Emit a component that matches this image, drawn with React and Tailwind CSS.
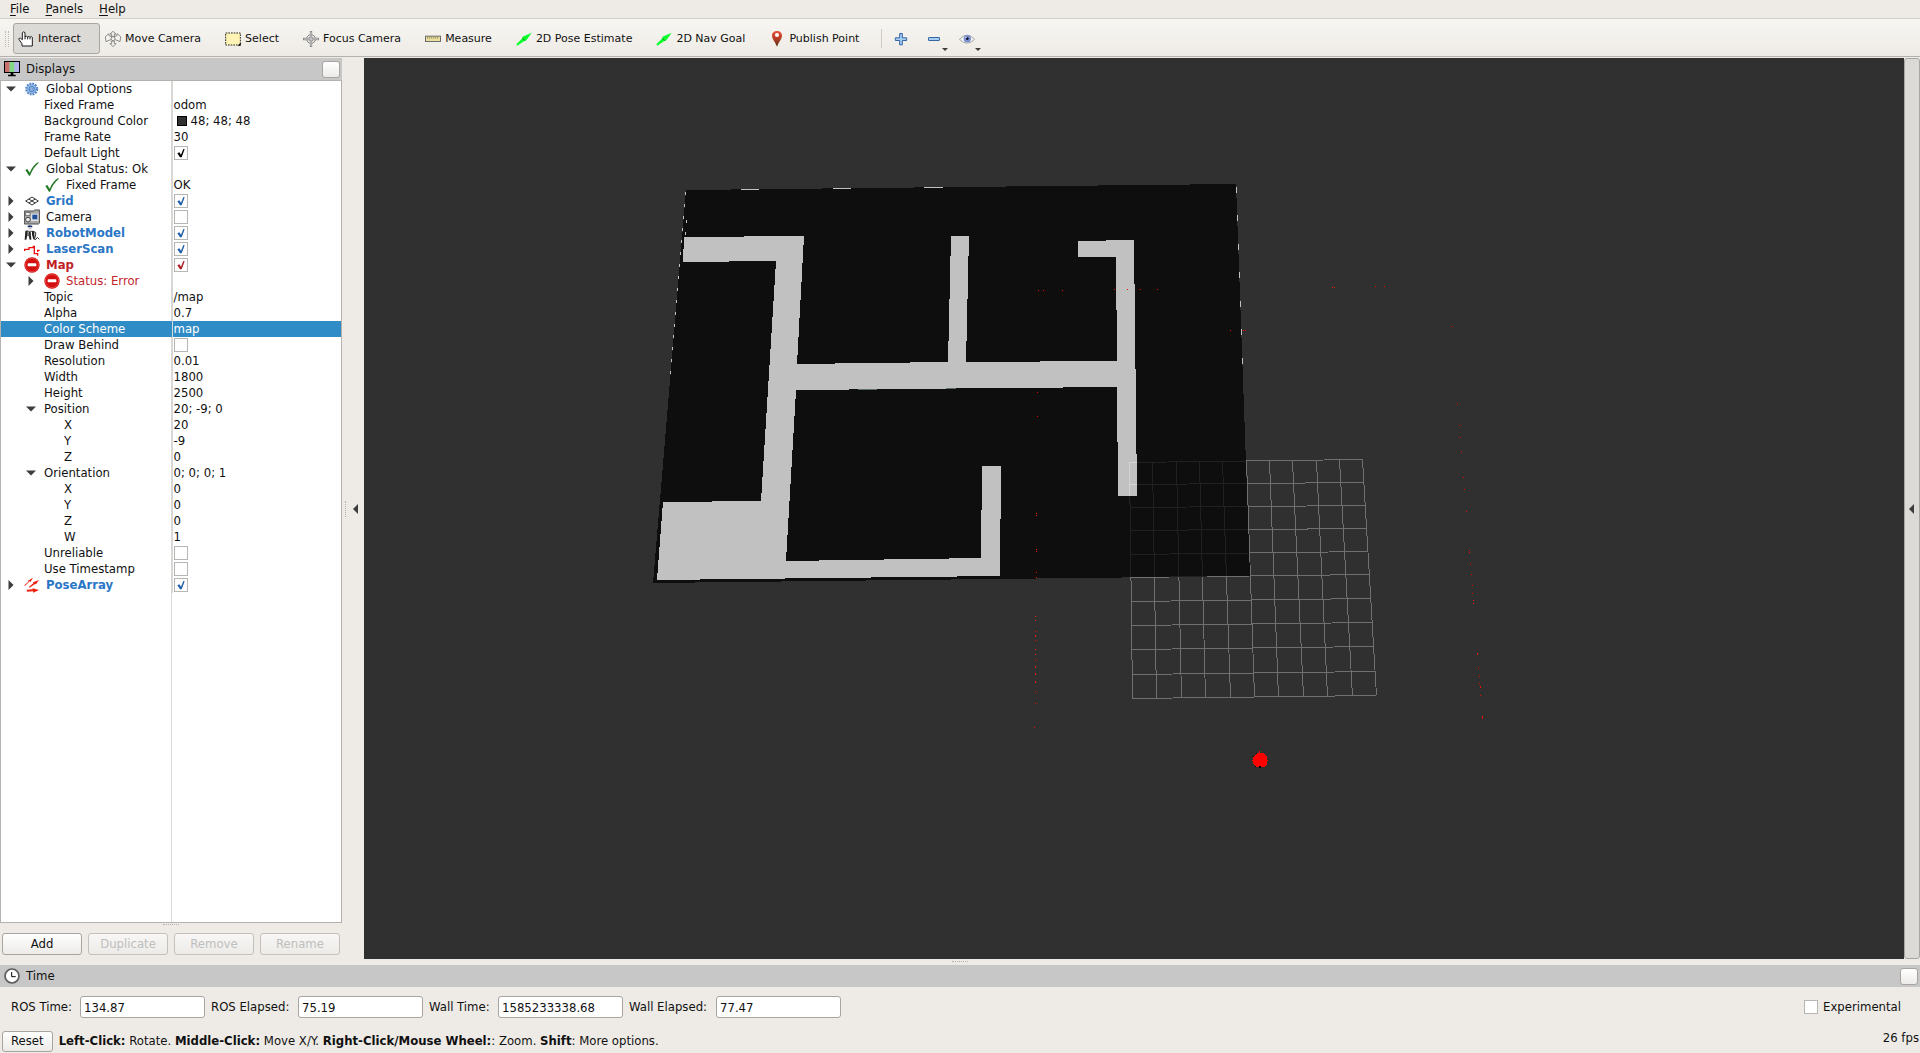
import React from "react";

/* ---------- toolbar icons ---------- */

function Icon({ children, className = "" }) {
  return (
    <svg viewBox="0 0 48 48" className={"h-4 w-4 shrink-0 " + className} aria-hidden="true">
      {children}
    </svg>
  );
}

const HandIcon = () => (
  <Icon>
    <path
      d="M13 5v21l-5-4q-5-2-6 2l10 14v7h31V19q-3-5-7 0q-3-5-7-1q-3-4-8-1V5q-4-5-8 0z"
      fill="#fff"
      stroke="#1c1c1c"
      strokeWidth="3"
      strokeLinejoin="round"
    />
    <path d="M21 16v9M29 18v7M36 19v6" stroke="#1c1c1c" strokeWidth="3" />
  </Icon>
);

const MoveIcon = () => (
  <Icon>
    <g fill="#f4f3f0" stroke="#777" strokeWidth="2.5" strokeLinejoin="round">
      <path d="M24 1l9 8h-5v9h-8V9h-5z" />
      <path d="M24 47l9-9h-5v-8h-8v8h-5z" />
      <path d="M1 17l11-9v6l9 3v8l-9 3-9 4z" />
      <path d="M47 17L36 8v6l-9 3v8l9 3 9 4z" />
      <circle cx="24" cy="23" r="6" />
    </g>
  </Icon>
);

const SelectIcon = () => (
  <Icon>
    <rect x="2" y="6" width="44" height="36" fill="#fff4b5" stroke="#222" strokeWidth="3" strokeDasharray="5 3" />
    <path d="M38 44h9v-9z" fill="#000" />
  </Icon>
);

const FocusIcon = () => (
  <Icon>
    <g fill="none" stroke="#858585" strokeWidth="3">
      <circle cx="24" cy="24" r="13" />
      <circle cx="24" cy="24" r="6" fill="#ccc" />
      <path d="M24 0v48M0 24h48" strokeWidth="7" stroke="#8b8b8b" />
      <path d="M24 3v42M3 24h42" strokeWidth="2" stroke="#f2f2f2" />
    </g>
  </Icon>
);

const MeasureIcon = () => (
  <Icon>
    <rect x="1.5" y="15.500" width="45" height="16" fill="#e9df9f" stroke="#6d6d6d" strokeWidth="3" />
    <path d="M8 17v6M14 17v6M20 17v6M26 17v6M32 17v6M38 17v6" stroke="#77713f" strokeWidth="2" />
  </Icon>
);

const ArrowIcon = () => (
  <Icon>
    <path d="M1 40l3 4 24-16 1 3 18-26-29 13 2 3z" fill="#0bff2b" />
    <path d="M19 22l8 7" stroke="#0a8a1c" strokeWidth="3" />
  </Icon>
);

const PinIcon = () => (
  <Icon>
    <defs>
      <linearGradient id="pin" x1="0" y1="0" x2="0" y2="1">
        <stop offset="0" stopColor="#e8553d" />
        <stop offset="0.5" stopColor="#b63a22" />
        <stop offset="1" stopColor="#4d3a1c" />
      </linearGradient>
    </defs>
    <path d="M24 0c-9 0-15 6-15 14 0 9 9 18 15 33 6-15 15-24 15-33C39 6 33 0 24 0z" fill="url(#pin)" />
    <circle cx="24" cy="12" r="6" fill="#fff" />
  </Icon>
);

const PlusIcon = () => (
  <Icon>
    <path d="M20 7.500h8v13h13v8H28v13h-8v-13H7v-8h13z" fill="#a6cdf0" stroke="#3465a4" strokeWidth="3" strokeLinejoin="round" />
  </Icon>
);

const MinusIcon = () => (
  <Icon>
    <rect x="7.500" y="19.500" width="33" height="9" rx="1" fill="#a6cdf0" stroke="#3465a4" strokeWidth="3" />
  </Icon>
);

const EyeIcon = () => (
  <Icon>
    <path d="M1 25Q24 0 47 25Q24 48 1 25z" fill="#f2f2f2" stroke="#a9a9a9" strokeWidth="3" />
    <circle cx="25" cy="23" r="11" fill="#7d8ed0" />
    <circle cx="25" cy="23" r="4" fill="#0e1230" />
    <circle cx="21" cy="19" r="2" fill="#fff" />
  </Icon>
);

/* ---------- display tree icons ---------- */

const MonitorIcon = () => (
  <Icon>
    <rect x="1.500" y="1.500" width="45" height="33" fill="#b2b2ee" stroke="#000" strokeWidth="3" />
    <rect x="3" y="3" width="14" height="30" fill="#c87070" />
    <rect x="17" y="3" width="14" height="30" fill="#84d884" />
    <path d="M20 36h8v5h7v5H12v-5h8z" fill="#000" />
  </Icon>
);

const GearIcon = () => (
  <Icon>
    <circle cx="23" cy="24" r="16" fill="none" stroke="#4d82c8" strokeWidth="7" strokeDasharray="5 3.380" />
    <circle cx="23" cy="24" r="14" fill="#9cc0ea" stroke="#4d82c8" strokeWidth="2" />
    <circle cx="23" cy="24" r="8" fill="#9cc0ea" stroke="#3f74bb" strokeWidth="3" />
    <circle cx="23" cy="24" r="3" fill="#e8f1fb" stroke="#3f74bb" strokeWidth="2" />
  </Icon>
);

const OkIcon = () => (
  <Icon>
    <path d="M4 27l6-3 7 11C23 20 32 9 43 3l1 3C33 15 25 27 18 44h-3z" fill="#227a26" />
  </Icon>
);

const GridIcon = () => (
  <Icon>
    <g fill="none" stroke="#333" strokeWidth="3">
      <path d="M24 12l19 12-19 12L5 24z" />
      <path d="M14.500 18l19 12M33.500 18l-19 12" />
    </g>
  </Icon>
);

const CameraIcon = () => (
  <Icon>
    <path d="M1 6h27l4-3h15v39l-4 3H1z" fill="#a9a9a9" stroke="#4a4a4a" strokeWidth="3" />
    <rect x="5" y="11" width="13" height="9" fill="#eee" stroke="#555" strokeWidth="2" />
    <circle cx="12" cy="32" r="7" fill="#eee" stroke="#444" strokeWidth="3" />
    <rect x="21" y="14" width="22" height="22" fill="#e3e3e3" />
    <rect x="25" y="17" width="15" height="14" fill="#1e4f9c" />
  </Icon>
);

const RobotIcon = () => (
  <Icon>
    <path d="M10 3q8-4 15 0v4H12z" fill="#17306e" />
    <path d="M13 8h10v5H13z" fill="#ccc" />
    <path d="M4 18l7-2v12l-4 16H2zM14 20h6l2 24h-5l-4-16zM24 17l7 2v10l2 14h-5l-4-14z" fill="#222" />
    <path d="M9 19h16M10 31h10" stroke="#555" strokeWidth="3" />
    <path d="M30 20q8 1 5 10l-4 13h5l4-6 6 6" fill="none" stroke="#3c3c3c" strokeWidth="3" />
  </Icon>
);

const LaserIcon = () => (
  <Icon>
    <path d="M2 30v-5h13v-5h13v-4h3v22h10v6M41 33v-5h6" fill="none" stroke="#f01010" strokeWidth="4" />
  </Icon>
);

const ErrorIcon = () => (
  <Icon>
    <circle cx="24" cy="24" r="23" fill="#d40f0f" />
    <circle cx="24" cy="24" r="20" fill="none" stroke="#ee5a55" strokeWidth="2" />
    <rect x="11" y="19" width="26" height="9" rx="2" fill="#fff" />
  </Icon>
);

const PosesIcon = () => (
  <Icon>
    <path
      d="M1 25l12-11-1-3L27 2 20 14l-3-1L3 27zM15 29l13-10-1-3 18-7-9 13-3-1-16 11zM8 38l18-1v-3l19 5-17 8-1-4-18 1z"
      fill="#ee2211"
    />
  </Icon>
);

const ClockIcon = () => (
  <Icon>
    <circle cx="24" cy="24" r="21" fill="#fff" stroke="#5c5c5c" strokeWidth="5" />
    <path d="M23 12v14h12" fill="none" stroke="#000" strokeWidth="3" />
  </Icon>
);

/* ---------- shared controls ---------- */

const CHECK_COLORS = {
  black: "#000000",
  blue: "#1f5fa5",
  red: "#a81c22",
};

function CheckBox({ label, checked = false, color = "black", id }) {
  return (
    <span className="grid h-3.5 w-3.5 shrink-0">
      <input
        id={id}
        type="checkbox"
        aria-label={id ? undefined : label}
        defaultChecked={checked}
        className="peer col-start-1 row-start-1 m-0 h-3.5 w-3.5 appearance-none border border-[#b8b6b3] bg-white"
      />
      <svg
        viewBox="0 0 42 42"
        className="pointer-events-none invisible col-start-1 row-start-1 h-3.5 w-3.5 peer-checked:visible"
        aria-hidden="true"
      >
        <path d="M10 22l6-3 5 7 7-17 4 1-9 24h-5z" fill={CHECK_COLORS[color]} />
      </svg>
    </span>
  );
}

function PushButton({ children, className = "", disabled, label }) {
  return (
    <button
      type="button"
      disabled={disabled}
      aria-label={label}
      className={
        "rounded-[3px] border border-[#a8a4a0] bg-linear-to-b from-white to-[#ecebe8] text-center disabled:border-[#c4c1bd] disabled:from-[#f8f7f5] disabled:text-[#bebebe] " +
        className
      }
    >
      {children}
    </button>
  );
}

/* ---------- menu and tool bars ---------- */

function MenuBar() {
  return (
    <nav className="flex h-[18px] items-center gap-4 px-2.5">
      {["File", "Panels", "Help"].map((m) => (
        <button key={m} type="button" className="leading-4">
          <span className="underline underline-offset-2">{m[0]}</span>
          {m.slice(1)}
        </button>
      ))}
    </nav>
  );
}

const TOOLS = [
  ["Interact", HandIcon],
  ["Move Camera", MoveIcon],
  ["Select", SelectIcon],
  ["Focus Camera", FocusIcon],
  ["Measure", MeasureIcon],
  ["2D Pose Estimate", ArrowIcon],
  ["2D Nav Goal", ArrowIcon],
  ["Publish Point", PinIcon],
];

function DropMark() {
  return (
    <svg viewBox="0 0 6 3" className="absolute right-0 bottom-0 h-[3px] w-1.5" aria-hidden="true">
      <path d="M0 0h6L3 3z" fill="#3c3c3c" />
    </svg>
  );
}

function ToolBar() {
  return (
    <div className="flex h-[39px] items-center border-t border-b border-t-[#d2cfcb] border-b-[#b4b1ad] bg-linear-to-b from-[#f8f6f2] to-[#eeebe6] pt-0.5 font-['DejaVu_Sans',sans-serif] text-[11px]">
      <div className="mr-1 ml-[5px] h-4 w-1 border-x border-dotted border-[#bdbab6]" />
      {TOOLS.map(([name, Glyph], i) => (
        <button
          key={name}
          type="button"
          aria-pressed={i === 0}
          className="flex h-[31px] items-center gap-1 rounded-[3px] border border-transparent pr-[18px] pl-1 aria-pressed:border-[#a9a6a2] aria-pressed:bg-[#dcdad6]"
        >
          <Glyph />
          {name}
        </button>
      ))}
      <div className="mr-[11px] ml-[3px] h-[19px] w-px bg-[#cfccc8]" />
      <button type="button" aria-label="Add tool" className="mr-[17px]">
        <PlusIcon />
      </button>
      <button type="button" aria-label="Remove tool" className="relative mr-[11px] pt-1 pr-1.5 pb-1">
        <MinusIcon />
        <DropMark />
      </button>
      <button type="button" aria-label="View options" className="relative pt-1 pr-1.5 pb-1">
        <EyeIcon />
        <DropMark />
      </button>
    </div>
  );
}

/* ---------- displays panel ---------- */

const ROWS = [
  { level: 0, arrow: "down", icon: GearIcon, name: "Global Options" },
  { level: 1, name: "Fixed Frame", value: "odom" },
  { level: 1, name: "Background Color", value: "48; 48; 48", swatch: true },
  { level: 1, name: "Frame Rate", value: "30" },
  { level: 1, name: "Default Light", check: "black", checked: true },
  { level: 0, arrow: "down", icon: OkIcon, name: "Global Status: Ok" },
  { level: 1, icon: OkIcon, name: "Fixed Frame", value: "OK" },
  { level: 0, arrow: "right", icon: GridIcon, name: "Grid", tone: "blue", check: "blue", checked: true },
  { level: 0, arrow: "right", icon: CameraIcon, name: "Camera", check: "black" },
  { level: 0, arrow: "right", icon: RobotIcon, name: "RobotModel", tone: "blue", check: "blue", checked: true },
  { level: 0, arrow: "right", icon: LaserIcon, name: "LaserScan", tone: "blue", check: "blue", checked: true },
  { level: 0, arrow: "down", icon: ErrorIcon, name: "Map", tone: "red", check: "red", checked: true },
  { level: 1, arrow: "right", icon: ErrorIcon, name: "Status: Error", tone: "error" },
  { level: 1, name: "Topic", value: "/map" },
  { level: 1, name: "Alpha", value: "0.7" },
  { level: 1, name: "Color Scheme", value: "map", selected: true },
  { level: 1, name: "Draw Behind", check: "black" },
  { level: 1, name: "Resolution", value: "0.01" },
  { level: 1, name: "Width", value: "1800" },
  { level: 1, name: "Height", value: "2500" },
  { level: 1, arrow: "down", name: "Position", value: "20; -9; 0" },
  { level: 2, name: "X", value: "20" },
  { level: 2, name: "Y", value: "-9" },
  { level: 2, name: "Z", value: "0" },
  { level: 1, arrow: "down", name: "Orientation", value: "0; 0; 0; 1" },
  { level: 2, name: "X", value: "0" },
  { level: 2, name: "Y", value: "0" },
  { level: 2, name: "Z", value: "0" },
  { level: 2, name: "W", value: "1" },
  { level: 1, name: "Unreliable", check: "black" },
  { level: 1, name: "Use Timestamp", check: "black" },
  { level: 0, arrow: "right", icon: PosesIcon, name: "PoseArray", tone: "blue", check: "blue", checked: true },
];

const INDENT = ["pl-0", "pl-5", "pl-10"];
const TONES = {
  blue: "font-bold text-[#2a76c6]",
  red: "font-bold text-[#c01f25]",
  error: "text-[#c4262c]",
};

function Expander({ arrow }) {
  if (!arrow) return <span className="w-[23px] shrink-0" />;
  return (
    <button
      type="button"
      aria-label={arrow === "down" ? "Collapse" : "Expand"}
      className="flex w-[23px] shrink-0 justify-start pl-[5px]"
    >
      <svg viewBox="0 0 10 10" className="h-2.5 w-2.5" aria-hidden="true">
        <path d={arrow === "down" ? "M0 2.500h10L5 7.500z" : "M2.500 0v10L7.500 5z"} fill="#3c3c3c" />
      </svg>
    </button>
  );
}

function TreeRow({ row }) {
  const Glyph = row.icon;
  return (
    <tr className={row.selected ? "bg-[#308cc6] text-white" : ""}>
      <td className="h-4 border-r border-[#dad8d6] p-0">
        <div className={"flex h-4 items-center " + INDENT[row.level]}>
          <Expander arrow={row.arrow} />
          {Glyph && <Glyph />}
          <span className={(Glyph ? "ml-1.5 " : "") + (TONES[row.tone] || "")}>{row.name}</span>
        </div>
      </td>
      <td className="h-4 p-0">
        <div className="flex h-4 items-center pl-px">
          {row.swatch && <span className="mr-1 ml-[3px] h-2.5 w-2.5 border border-black bg-[#303030]" />}
          {row.check && <CheckBox label={row.name} checked={row.checked} color={row.check} />}
          {row.value}
        </div>
      </td>
    </tr>
  );
}

function PanelTitle({ icon, title }) {
  return (
    <header className="flex h-[22px] shrink-0 items-center bg-[#c7c7c7] pr-0.5 pl-1">
      {icon}
      <h2 className="ml-1.5 flex-1">{title}</h2>
      <PushButton className="h-[17px] w-[18px]" label={"Close " + title} />
    </header>
  );
}

function DisplaysPanel() {
  return (
    <aside className="flex w-[342px] shrink-0 flex-col">
      <PanelTitle icon={<MonitorIcon />} title="Displays" />
      <div className="flex-1 border border-[#b5b1ad] bg-white bg-linear-to-r from-[#dad8d6] to-[#dad8d6] bg-size-[1px_100%] bg-position-[170px_0] bg-no-repeat">
        <table className="w-full table-fixed border-collapse">
          <colgroup>
            <col className="w-[171px]" />
            <col />
          </colgroup>
          <tbody>
            {ROWS.map((row, i) => (
              <TreeRow key={i} row={row} />
            ))}
          </tbody>
        </table>
      </div>
      <div className="mx-auto mt-px h-px w-4 border-t border-dotted border-[#b5b1ad]" />
      <div className="mt-2 grid grid-cols-4 gap-1.5 px-0.5 pb-1">
        <PushButton className="h-[22px]">Add</PushButton>
        <PushButton className="h-[22px]" disabled>Duplicate</PushButton>
        <PushButton className="h-[22px]" disabled>Remove</PushButton>
        <PushButton className="h-[22px]" disabled>Rename</PushButton>
      </div>
    </aside>
  );
}

/* ---------- 3D scene ---------- */

const GRID_ROWS = [
  [1129, 462, 1362, 459], [1130, 484, 1364, 482], [1130, 507, 1365, 505], [1130, 530, 1367, 528],
  [1130, 554, 1368, 551], [1130, 577, 1370, 574], [1131, 601, 1371, 598], [1131, 625, 1372, 622],
  [1131, 649, 1374, 646], [1132, 674, 1375, 671], [1132, 698, 1376, 695],
];

const GRID_COLS = [
  [1129, 462, 1132, 698], [1152, 462, 1156, 698], [1176, 461, 1181, 698], [1199, 461, 1205, 697],
  [1222, 461, 1230, 697], [1246, 460, 1254, 697], [1269, 460, 1278, 697], [1292, 460, 1303, 696],
  [1316, 460, 1327, 696], [1339, 459, 1352, 696], [1362, 459, 1376, 695],
];

const SCAN = [
  [1038, 290], [1043, 290], [1062, 290], [1114, 289], [1127, 289], [1140, 289], [1157, 289],
  [1230, 330], [1243, 330], [1245, 330], [1332, 287], [1334, 287], [1375, 286], [1384, 286],
  [1451, 326], [1457, 403], [1037, 392], [1037, 416], [1036, 513], [1036, 515], [1036, 549],
  [1036, 551], [1036, 572], [1036, 577], [1035, 616], [1035, 620], [1035, 631], [1035, 635, 2],
  [1035, 640], [1035, 649], [1035, 654], [1035, 660], [1035, 666, 2], [1035, 673, 2],
  [1035, 681, 2], [1035, 691], [1035, 703], [1034, 727], [1459, 425], [1460, 437], [1461, 451],
  [1463, 477], [1464, 489], [1466, 511], [1469, 550], [1469, 552], [1470, 564], [1471, 574],
  [1472, 585], [1472, 593], [1473, 600], [1473, 603], [1477, 653, 2], [1478, 667], [1479, 676],
  [1479, 683], [1480, 686, 2], [1480, 695], [1482, 716, 3],
];

function Scene() {
  return (
    <svg
      viewBox="364 58 1540 901"
      preserveAspectRatio="xMidYMid slice"
      className="block h-full min-h-0 w-full"
      role="img"
      aria-label="Map view"
      shapeRendering="crispEdges"
    >
      <g stroke="#707070" strokeWidth="1" transform="translate(0.500 0.500)">
        {[...GRID_ROWS, ...GRID_COLS].map(([x1, y1, x2, y2], i) => (
          <line key={i} x1={x1} y1={y1} x2={x2} y2={y2} />
        ))}
      </g>
      <g opacity="0.700">
        <path d="M686 190L1236 184L1250 576L653 583z" fill="#000" />
        <path
          d="M684 237L804 236L797 364L948 362L951 236H969L966 362L1117 361L1116 257H1078V241L1134 240L1137 496H1118L1117 387L796 390L786 561L981 558L982 466H1001L1000 576L657 580L663 502L761 501L776 261L683 262z"
          fill="#fff"
        />
        <path d="M741 189.500h18M833 188.500h18M924 187.500h19" stroke="#fff" strokeWidth="1" />
        <path d="M685.500 192L670 374" stroke="#fff" strokeWidth="1" strokeDasharray="3 9" />
        <path d="M686.500 220v3M685.500 232v3" stroke="#fff" strokeWidth="1" />
        <path d="M1236.500 187L1242.500 364" stroke="#fff" strokeWidth="1" strokeDasharray="6 22.500" />
        <path d="M858 389.500h19M946 388.500h10" stroke="#6f8a82" strokeWidth="1" />
      </g>
      <g fill="#f00808">
        {SCAN.map(([x, y, h = 1], i) => (
          <rect key={i} x={x} y={y} width="1" height={h} />
        ))}
      </g>
      <path d="M1257 753h2v-2h1v2h3l4 4v3h1v1h-1v3l-3 3h-8l-3-3v-3h-1v-1h1v-3z" fill="#f00" />
      <path d="M1259 766h2v2h-2zM1256 753h1v1h-1zM1253 756h1v1h-1zM1255 766h1v1h-1z" fill="#000" />
    </svg>
  );
}

function SideArrow() {
  return (
    <svg viewBox="0 0 5 10" className="h-2.5 w-[5px]" aria-hidden="true">
      <path d="M5 0v10L0 5z" fill="#3c3c3c" />
    </svg>
  );
}

/* ---------- time panel and status bar ---------- */

const FIELDS = [
  ["ros-time", "ROS Time:", "134.87", "min-w-[63px]"],
  ["ros-elapsed", "ROS Elapsed:", "75.19", "min-w-[81px]"],
  ["wall-time", "Wall Time:", "1585233338.68", "min-w-[63px]"],
  ["wall-elapsed", "Wall Elapsed:", "77.47", "min-w-[81px]"],
];

function TimePanel() {
  return (
    <section>
      <PanelTitle icon={<ClockIcon />} title="Time" />
      <div className="flex items-center gap-1.5 py-[9px] pr-[18px] pl-[11px]">
        {FIELDS.map(([id, label, value, width]) => (
          <React.Fragment key={id}>
            <label htmlFor={id} className={width}>{label}</label>
            <input
              id={id}
              type="text"
              readOnly
              value={value}
              className="h-[22px] w-[125px] rounded-[3px] border border-[#a8a4a0] bg-white px-[3px]"
            />
          </React.Fragment>
        ))}
        <div className="ml-auto flex items-center gap-[5px]">
          <CheckBox id="experimental" label="Experimental" />
          <label htmlFor="experimental" className="min-w-[79px]">Experimental</label>
        </div>
      </div>
    </section>
  );
}

function StatusBar() {
  return (
    <footer className="flex items-center gap-1.5 pt-[3px] pr-px pb-px pl-0.5">
      <PushButton className="h-[21px] px-2">Reset</PushButton>
      <p className="flex-1">
        <b>Left-Click:</b> Rotate. <b>Middle-Click:</b> Move X/Y. <b>Right-Click/Mouse Wheel:</b>: Zoom.{" "}
        <b>Shift</b>: More options.
      </p>
      <span className="pb-1.5">26 fps</span>
    </footer>
  );
}

export default function App() {
  return (
    <div className="flex h-screen flex-col overflow-hidden bg-[#eeebe6] font-['DejaVu_Sans_Condensed','DejaVu_Sans',sans-serif] text-[13px] leading-4 text-[#111]">
      <MenuBar />
      <ToolBar />
      <main className="mt-px flex min-h-0 flex-1">
        <DisplaysPanel />
        <div className="flex w-[22px] shrink-0 items-center gap-1.5 pl-[3px]">
          <div className="h-4 border-l border-dotted border-[#b5b1ad]" />
          <button type="button" aria-label="Hide left panel" className="pl-px">
            <SideArrow />
          </button>
        </div>
        <div className="min-w-0 flex-1 bg-[#303030]">
          <Scene />
        </div>
        <button
          type="button"
          aria-label="Show right panel"
          className="flex w-4 shrink-0 items-center justify-center rounded-[3px] border border-[#a9a6a2] bg-[#dcdad6] pr-px"
        >
          <SideArrow />
        </button>
      </main>
      <div className="flex h-1.5 items-start justify-center pt-0.5">
        <div className="w-4 border-t border-dotted border-[#b5b1ad]" />
      </div>
      <TimePanel />
      <StatusBar />
    </div>
  );
}
